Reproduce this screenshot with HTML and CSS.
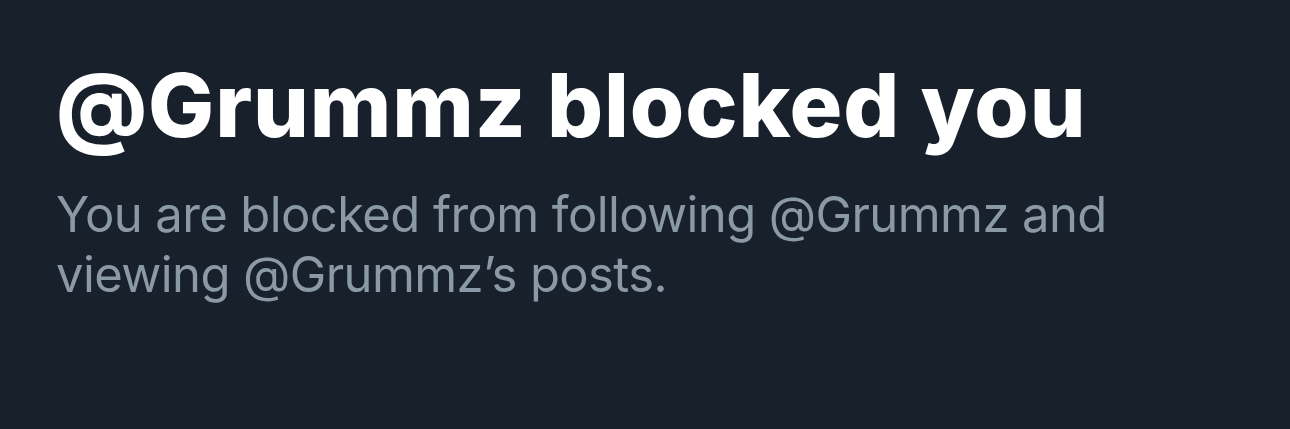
FILE: index.html
```html
<!DOCTYPE html>
<html>
<head>
<meta charset="utf-8">
<link rel="stylesheet" href="styles.css">
</head>
<body>
<main class="blocked">
  <h1 class="title">@Grummz blocked you</h1>
  <p class="subtitle">You are blocked from following @Grummz and viewing @Grummz’s posts.</p>
</main>
</body>
</html>
```

FILE: styles.css
```css
html, body {
  margin: 0;
  padding: 0;
  background: #17202b;
  height: 100%;
}
.blocked {
  padding: 55px 56px 0 56px;
  font-family: Inter, "Noto Sans", sans-serif;
  max-width: 1080px;
}
.title {
  margin: 0;
  color: #ffffff;
  font-weight: 800;
  font-size: 88px;
  line-height: 100px;
  letter-spacing: 0.9px;
  white-space: nowrap;
}
.subtitle {
  margin: 30px 0 0 0;
  color: #8b98a5;
  font-weight: 400;
  font-size: 49px;
  line-height: 60px;
  letter-spacing: -0.6px;
}
```
